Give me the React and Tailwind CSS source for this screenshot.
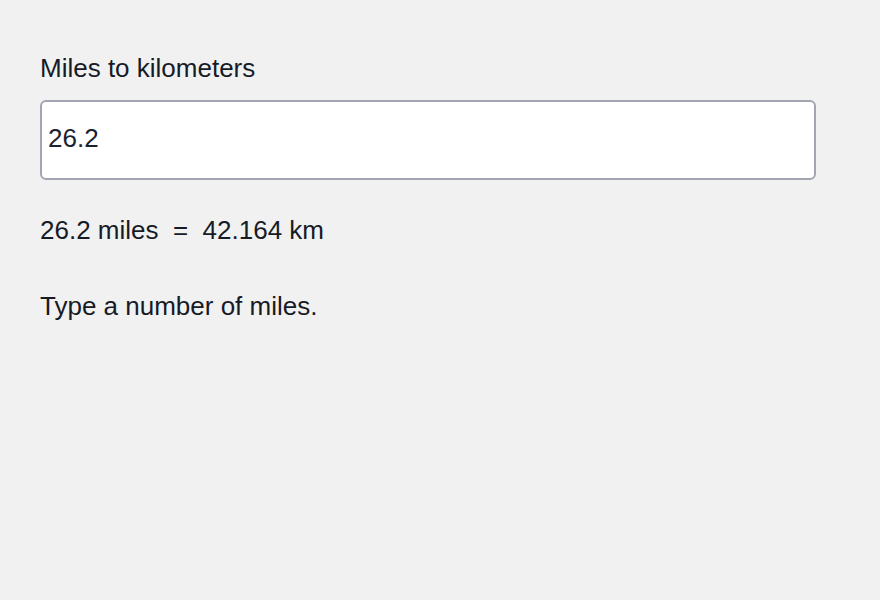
import React, { useState } from 'react';

const KM_PER_MILE = 1.6093;

const App = () => {
  const [miles, setMiles] = useState('26.2');

  const value = parseFloat(miles);
  const km = isNaN(value) ? '' : (Math.round(value * KM_PER_MILE * 1000) / 1000).toString();

  return (
    <div className="min-h-screen bg-[#f2f1f2] text-[#161b26] px-10 pt-[52px] font-['Liberation_Sans',Arial,sans-serif] text-[26px] leading-8">
      <label htmlFor="miles" className="block">Miles to kilometers</label>

      {/* Input */}
      <input
        id="miles"
        type="text"
        value={miles}
        onChange={(e) => setMiles(e.target.value)}
        className="mt-4 block w-[776px] h-20 bg-white border-2 border-[#a2a5b0] rounded-md px-1.5 pb-1 text-[26px] text-[#1c2230] outline-none"
      />

      {/* Result */}
      <p className="mt-[34px] whitespace-pre">
        {miles} miles{'  =  '}{km} km
      </p>

      <p className="mt-11">Type a number of miles.</p>
    </div>
  );
};

export default App;
